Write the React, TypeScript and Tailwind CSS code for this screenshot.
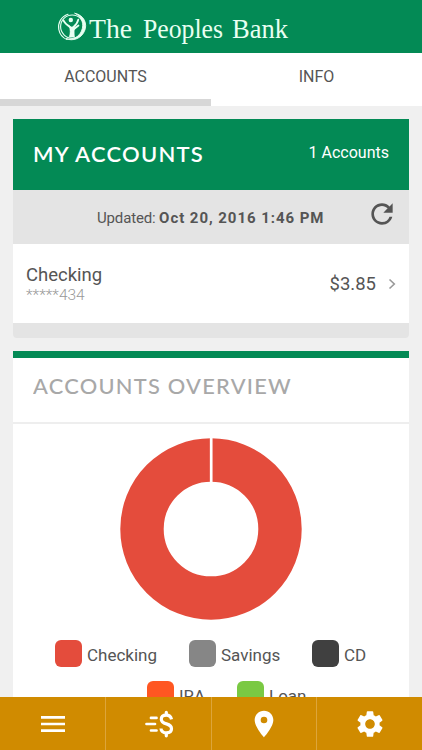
import { MdMenu, MdPlace, MdRefresh, MdSettings } from 'react-icons/md'

interface LegendItem {
  label: string
  color: string
  box: string
}

const legendRows: LegendItem[][] = [
  [
    { label: 'Checking', color: 'bg-[#e44c3c]', box: 'w-[134px]' },
    { label: 'Savings', color: 'bg-[#868686]', box: 'w-[123px]' },
    { label: 'CD', color: 'bg-[#404040]', box: 'w-[60px]' },
  ],
  [
    { label: 'IRA', color: 'bg-[#ff5722]', box: 'w-[90px]' },
    { label: 'Loan', color: 'bg-[#7ac943]', box: 'w-[70px]' },
  ],
]

function BankLogo() {
  return (
    <svg width="30" height="30" viewBox="0 0 30 30" fill="none" stroke="#e9fff2" strokeLinecap="round">
      <circle cx="15.2" cy="14.6" r="11.6" strokeWidth="1.1" />
      <path d="M18 1.3C27 3 31 12 27.3 19.500C24 26.500 16 29.500 9 26.700C16 28 22 25 24.500 19C27.500 12 25 5 18 1.300Z" fill="#e9fff2" strokeWidth="0.9" />
      <path d="M11 2.300C4 4.500 .700 11 1.800 17.500C2.800 22.500 6 26 10 27.500" strokeWidth="1.200" />
      <circle cx="13.800" cy="8" r="2.200" fill="#e9fff2" stroke="none" />
      <path d="M6.500 8.500C8 11.500 10 13 13.500 15.500M21.300 7.500C20.500 11.500 18.500 13.500 16 15.500M21.500 13.500L16.500 17.500" strokeWidth="1.700" />
      <path d="M12 13.500C14 15.500 16 15.500 18 13.500C17 17 17 21 17.500 25L12.200 25C13.500 21 13.500 18 12 13.500Z" fill="#e9fff2" strokeWidth="0.5" />
    </svg>
  )
}

function SendMoneyIcon() {
  return (
    <svg width="30" height="30" viewBox="0 0 30 30" fill="none" stroke="#fff" strokeLinecap="round">
      <path d="M7 8.900H12.500M2.500 15H11M7 21.500H12.500" strokeWidth="2.700" />
      <path d="M27.500 10.300C26.800 7.400 24.800 6.200 22.300 6.200C19.300 6.200 17.300 7.700 17.300 10.200C17.300 12.800 19.500 14 22.500 14.900C25.500 15.800 27.500 17.200 27.500 19.700C27.500 22.400 25.300 23.800 22.400 23.800C19.200 23.800 17.200 22.300 17 19.500" strokeWidth="3.200" strokeLinecap="butt" />
      <path d="M22.300 5.200V3.300M22.300 24.800V26.800" strokeWidth="3.200" />
    </svg>
  )
}

function DonutChart() {
  return (
    <svg width="182" height="182" viewBox="0 0 182 182" className="block">
      <circle cx="91" cy="91" r="69" fill="none" stroke="#e44c3c" strokeWidth="43.400" />
      <path d="M91.200 0V46" stroke="#fff" strokeWidth="2.700" />
    </svg>
  )
}

export default function App() {
  return (
    <div className="flex h-[750px] w-[422px] flex-col overflow-hidden bg-[#f0f0f0] font-['Roboto',sans-serif] text-[#555]">
      {/* Header */}
      <header className="flex h-[53px] shrink-0 items-center bg-[#038a55] pl-[57px]">
        <BankLogo />
        <svg width="204" height="40" viewBox="0 0 204 40" className="ml-px" fill="#e9fff2">
          <g className="font-['Liberation_Serif',serif] text-[28px]">
            <text x="1" y="31" textLength="43" lengthAdjust="spacingAndGlyphs">The</text>
            <text x="55" y="31" textLength="80" lengthAdjust="spacingAndGlyphs">Peoples</text>
            <text x="144" y="31" textLength="56" lengthAdjust="spacingAndGlyphs">Bank</text>
          </g>
        </svg>
      </header>

      {/* Tabs */}
      <nav className="flex h-[53px] shrink-0 bg-white text-[16px]">
        <button className="w-1/2 border-b-[7px] border-[#d7d7d7] pt-[2px]">ACCOUNTS</button>
        <button className="w-1/2 border-b-[7px] border-transparent pt-[2px]">INFO</button>
      </nav>

      <main className="flex min-h-0 flex-1 flex-col gap-[13px] overflow-hidden px-[13px] pt-[13px]">
        {/* Accounts */}
        <section className="h-[219px] shrink-0 overflow-hidden rounded-b bg-[#e4e4e4]">
          <div className="flex h-[71px] items-center justify-between bg-[#038a55] px-5 text-white">
            <svg width="176" height="30" viewBox="0 0 176 30">
              <text x="0" y="21.500" textLength="171" lengthAdjust="spacingAndGlyphs" fill="#fff" className="font-['Lato',sans-serif] text-[21px] font-semibold tracking-[1.2px]">
                MY ACCOUNTS
              </text>
            </svg>
            <span className="mt-[-4px] text-[16px]">1 Accounts</span>
          </div>
          <div className="flex h-[54px] items-center pr-[11px] pl-[84px]">
            <p className="flex-1 pt-[2px] text-[15px] whitespace-nowrap">
              <span className="tracking-[-0.15px]">Updated: </span>
              <b className="tracking-[0.95px]">Oct 20, 2016 1:46 PM</b>
            </p>
            <MdRefresh className="mb-[7px] size-8" />
          </div>
          <div className="flex h-[79px] items-center bg-white pr-[12px] pl-[13px]">
            <div className="flex-1 pt-[2px]">
              <div className="text-[18.5px] leading-[22px]">Checking</div>
              <div className="text-[15.5px] leading-[19px] font-light text-[#999]">*****434</div>
            </div>
            <span className="pt-[2px] text-[18.5px]">$3.85</span>
            <svg width="10" height="12" viewBox="0 0 10 12" className="ml-[11px]" fill="none" stroke="#999" strokeWidth="1.600">
              <path d="M2.500 1.500L7.300 6L2.500 10.500" />
            </svg>
          </div>
        </section>

        {/* Overview */}
        <section className="h-[400px] shrink-0 border-t-[7px] border-[#038a55] bg-white">
          <div className="flex h-[66px] items-center border-b-2 border-[#eee] pl-5">
            <svg width="264" height="30" viewBox="0 0 264 30" className="mb-[9px]">
              <text x="0" y="23" textLength="259" lengthAdjust="spacingAndGlyphs" fill="#a8a8a8" className="font-['Lato',sans-serif] text-[21px] font-medium tracking-[1.2px]">
                ACCOUNTS OVERVIEW
              </text>
            </svg>
          </div>
          <div className="flex justify-center pt-[14px]">
            <DonutChart />
          </div>
          <div className="flex flex-col gap-[14px] pt-5">
            {legendRows.map((row, i) => (
              <div key={i} className={`flex ${i === 0 ? 'pl-[42px]' : 'pl-[134px]'}`}>
                {row.map(item => (
                  <div key={item.label} className={`flex h-[27px] shrink-0 items-center gap-[5px] ${item.box}`}>
                    <span className={`size-[27px] shrink-0 rounded-md ${item.color}`} />
                    <span className="pt-1 text-[17px] whitespace-nowrap">{item.label}</span>
                  </div>
                ))}
              </div>
            ))}
          </div>
        </section>
      </main>

      {/* Bottom bar */}
      <footer className="grid h-[53px] shrink-0 grid-cols-4 divide-x divide-[#dda53a] bg-[#d08b00] pl-px text-white">
        <button className="flex items-center justify-center pr-px"><MdMenu className="size-8" /></button>
        <button className="flex items-center justify-center pl-[2px]"><SendMoneyIcon /></button>
        <button className="flex items-center justify-center pl-px"><MdPlace className="size-8" /></button>
        <button className="flex items-center justify-center pl-px"><MdSettings className="size-8" /></button>
      </footer>
    </div>
  )
}
